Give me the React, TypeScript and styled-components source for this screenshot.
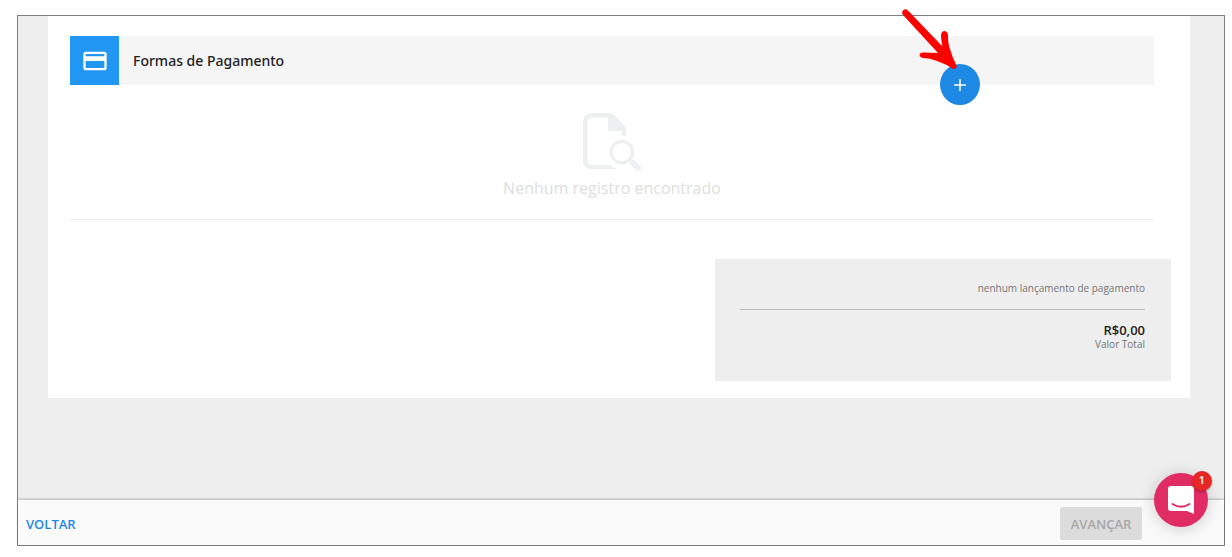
import React from "react";
import styled, { createGlobalStyle } from "styled-components";

const GlobalStyle = createGlobalStyle`
  *, *::before, *::after { box-sizing: border-box; }
  body {
    margin: 0;
    background: #fff;
    color: #212121;
    font-family: "Open Sans", "Noto Sans", sans-serif;
  }
`;

const Page = styled.div`
  display: flex;
  min-height: 100vh;
  padding: 15px 7px 11px 17px;
`;

const Frame = styled.div`
  position: relative;
  flex: 1;
  display: flex;
  flex-direction: column;
  border: 1px solid #808080;
  background: #eeeeee;
`;

const Content = styled.main`
  flex: 1;
  padding: 0 34px 40px 30px;
`;

const Card = styled.section`
  display: flex;
  flex-direction: column;
  padding: 20px 19px 17px 22px;
  background: #fff;
`;

const Payments = styled.div`
  margin-right: 17px;
  border-bottom: 1px solid #eeeeee;
`;

const SectionHeader = styled.header`
  position: relative;
  display: flex;
  align-items: center;
  gap: 14px;
  height: 49px;
  background: #f5f5f5;
`;

const SectionIcon = styled.span`
  display: grid;
  place-items: center;
  width: 49px;
  height: 49px;
  background: #2196f3;
`;

const SectionTitle = styled.h2`
  margin: 0;
  font-family: "Noto Sans", "Open Sans", sans-serif;
  font-size: 14px;
  font-weight: 500;
`;

const AddButton = styled.button`
  position: absolute;
  right: 174px;
  bottom: -20px;
  display: grid;
  place-items: center;
  width: 40px;
  height: 41px;
  padding: 0;
  border: 0;
  border-radius: 50%;
  background: #1e88e5;
  cursor: pointer;
`;

const Pointer = styled.svg`
  position: absolute;
  right: 197px;
  top: -28px;
  pointer-events: none;
`;

const EmptyState = styled.div`
  display: flex;
  flex-direction: column;
  align-items: center;
  gap: 6px;
  padding: 28px 0 20px;
`;

const EmptyText = styled.p`
  margin: 0;
  color: #dedede;
  font-size: 16px;
  line-height: 22px;
`;

const Summary = styled.div`
  align-self: flex-end;
  width: 456px;
  max-width: 100%;
  margin-top: 39px;
  padding: 22px 26px 30px 25px;
  background: #eeeeee;
  text-align: right;
`;

const Note = styled.p`
  margin: 0;
  color: #757575;
  font-size: 10px;
  line-height: 14px;
`;

const Divider = styled.hr`
  margin: 14px 0;
  border: 0;
  border-top: 1px solid #bdbdbd;
`;

const Total = styled.p`
  margin: 0;
  font-size: 13px;
  font-weight: 600;
  line-height: 13px;
`;

const Footer = styled.footer`
  display: flex;
  align-items: center;
  justify-content: space-between;
  height: 45px;
  padding: 2px 82px 0 8px;
  background: #fafafa;
  box-shadow: 0 -1px 2px rgba(0, 0, 0, 0.25);
`;

const BackButton = styled.button`
  padding: 0;
  border: 0;
  background: none;
  color: #1e88e5;
  font: 600 13px "Open Sans", sans-serif;
  cursor: pointer;
`;

const NextButton = styled.button`
  width: 82px;
  height: 33px;
  padding: 0;
  border: 0;
  border-radius: 2px;
  background: #dcdcdc;
  color: #a6a6a6;
  font: 600 13px "Open Sans", sans-serif;
`;

const ChatButton = styled.button`
  position: absolute;
  right: 16px;
  bottom: 18px;
  display: grid;
  place-items: center;
  width: 54px;
  height: 54px;
  padding: 0;
  border: 0;
  border-radius: 50%;
  background: #e02b63;
  box-shadow: 0 2px 16px rgba(0, 0, 0, 0.18);
  cursor: pointer;
`;

const Badge = styled.span`
  position: absolute;
  top: -2px;
  right: -4px;
  width: 20px;
  height: 20px;
  border-radius: 50%;
  background: #e92626;
  box-shadow: 0 1px 2px rgba(0, 0, 0, 0.35);
  color: #fff;
  font: 600 11px/18px "Open Sans", sans-serif;
  text-align: center;
`;

const CardIcon = () => (
  <svg width="28" height="28" viewBox="0 0 24 24" fill="#fff" aria-hidden="true">
    <path d="M20 4H4c-1.11 0-1.99.89-1.99 2L2 18c0 1.11.89 2 2 2h16c1.11 0 2-.89 2-2V6c0-1.11-.89-2-2-2zm0 14H4v-6h16v6zm0-10H4V6h16v2z" />
  </svg>
);

const SearchFileIcon = () => (
  <svg width="58" height="58" viewBox="0 0 58 58" fill="none" aria-hidden="true">
    <path
      d="M9 0H26Q29 0 31 2L41 12Q43 14 43 18V21Q43 23 41 23Q38.500 23 38.500 20.500V18H27Q25 18 25 16V4.500H10Q4.500 4.500 4.500 10V46Q4.500 52 10 52H27Q30 55 35 56H9Q0 56 0 47V9Q0 0 9 0Z"
      fill="#ecf0f1"
    />
    <circle cx="39" cy="39" r="10.700" stroke="#ecf0f1" strokeWidth="3.200" />
    <path d="M50 50L55 55" stroke="#ecf0f1" strokeWidth="6" strokeLinecap="round" />
  </svg>
);

export default function App() {
  return (
    <Page>
      <GlobalStyle />
      <Frame>
        <Content>
          <Card>
            <Payments>
              <SectionHeader>
                <SectionIcon>
                  <CardIcon />
                </SectionIcon>
                <SectionTitle>Formas de Pagamento</SectionTitle>
                <AddButton type="button" aria-label="Adicionar">
                  <svg width="12" height="12" viewBox="0 0 12 12" aria-hidden="true">
                    <path d="M6 0V12M0 6H12" stroke="#fff" strokeWidth="1.500" />
                  </svg>
                </AddButton>
                <Pointer width="56" height="62" viewBox="0 0 56 62" aria-hidden="true">
                  <path
                    d="M2 2.500Q4.500 0 7 2.500L41.500 38.500C40.500 34 40 30 40 27Q40.500 23 43.500 23Q46.500 23.500 47 27C47 33 47.500 37 49 41Q51 49 55.500 57.500Q56 61.500 52 61Q45 56 36 53Q29 50 22 50Q18.500 49 18.500 46.500Q19.500 44 23 44.500Q29 44.500 37 45L2.500 7.500Q0 5 2 2.500Z"
                    fill="#fe0000"
                  />
                </Pointer>
              </SectionHeader>
              <EmptyState>
                <SearchFileIcon />
                <EmptyText>Nenhum registro encontrado</EmptyText>
              </EmptyState>
            </Payments>
            <Summary>
              <Note>nenhum lançamento de pagamento</Note>
              <Divider />
              <Total>R$0,00</Total>
              <Note>Valor Total</Note>
            </Summary>
          </Card>
        </Content>
        <Footer>
          <BackButton type="button">VOLTAR</BackButton>
          <NextButton type="button" disabled>
            AVANÇAR
          </NextButton>
        </Footer>
        <ChatButton type="button" aria-label="Abrir chat">
          <svg width="28" height="30" viewBox="0 0 28 30" aria-hidden="true">
            <path d="M4 1H24Q27 1 27 4V29L20 26H4Q1 26 1 23V4Q1 1 4 1Z" fill="#fff" />
            <path d="M5.500 19Q14 24.500 22.500 19" fill="none" stroke="#e02b63" strokeWidth="1.800" strokeLinecap="round" />
          </svg>
          <Badge>1</Badge>
        </ChatButton>
      </Frame>
    </Page>
  );
}
